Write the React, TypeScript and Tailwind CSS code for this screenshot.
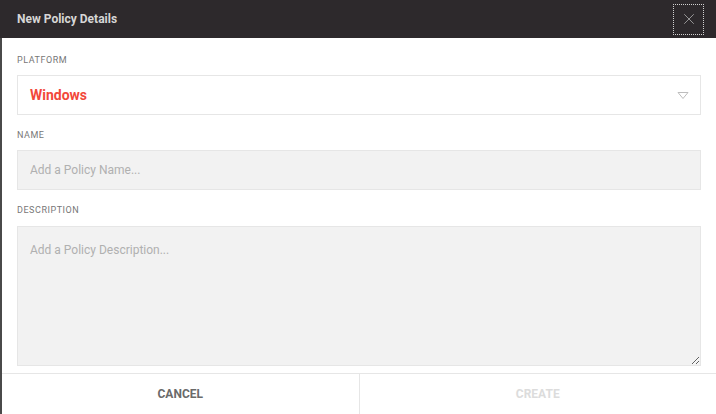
import { X } from "lucide-react";

const font = { fontFamily: "Roboto, 'Liberation Sans', sans-serif" };

function FieldLabel({ children, className = "" }: { children: string; className?: string }) {
  return (
    <div className={`flex h-[12px] items-center text-[9px] uppercase tracking-[0.06em] text-[#777] ${className}`}>
      {children}
    </div>
  );
}

export default function App() {
  return (
    <div className="flex h-[414px] w-[716px] flex-col bg-white" style={font}>
      <header className="flex h-[38px] shrink-0 items-center justify-between bg-[#2d292c] pl-[17px] pr-[12px]">
        <h1 className="text-[12px] font-bold text-[#d6d6d6]">New Policy Details</h1>
        <button className="flex h-[31px] w-[31px] items-center justify-center border border-dotted border-[#d0d0d0] text-[#a0a0a0]">
          <X className="h-[18px] w-[18px]" strokeWidth={1.2} />
        </button>
      </header>

      <div className="flex flex-1 flex-col border-l-2 border-[#4a4a4a]">
        <div className="flex flex-1 flex-col pl-[15px] pr-[15px] pt-[17px]">
          <FieldLabel>Platform</FieldLabel>
          <div className="mt-[8px] flex h-[40px] items-center justify-between border border-[#e6e6e6] bg-white pl-[12px] pr-[11px]">
            <span className="text-[14px] font-bold text-[#f2473a]">Windows</span>
            <svg width="12" height="9" viewBox="0 0 12 9" className="text-[#bdbdbd]">
              <path d="M1 1.5 H11 L6 7.5 Z" fill="none" stroke="currentColor" strokeWidth="1" strokeLinejoin="round" />
            </svg>
          </div>

          <FieldLabel className="mt-[15px]">Name</FieldLabel>
          <input
            className="mt-[8px] h-[40px] border border-[#e6e6e6] bg-[#f2f2f2] px-[12px] text-[12px] text-[#555] outline-none placeholder:text-[#b0b0b0]"
            placeholder="Add a Policy Name..."
          />

          <FieldLabel className="mt-[15px]">Description</FieldLabel>
          <textarea
            className="mt-[9px] h-[140px] border border-[#e6e6e6] bg-[#f2f2f2] px-[12px] pt-[14px] text-[12px] text-[#555] outline-none placeholder:text-[#b0b0b0]"
            placeholder="Add a Policy Description..."
          />
        </div>

        <footer className="flex h-[41px] shrink-0 border-t border-[#e6e6e6]">
          <button className="flex flex-1 items-center justify-center border-r border-[#e6e6e6] text-[12px] font-bold text-[#6a6a6a]">
            CANCEL
          </button>
          <button className="flex flex-1 items-center justify-center text-[12px] font-bold text-[#dcdcdc]">
            CREATE
          </button>
        </footer>
      </div>
    </div>
  );
}
